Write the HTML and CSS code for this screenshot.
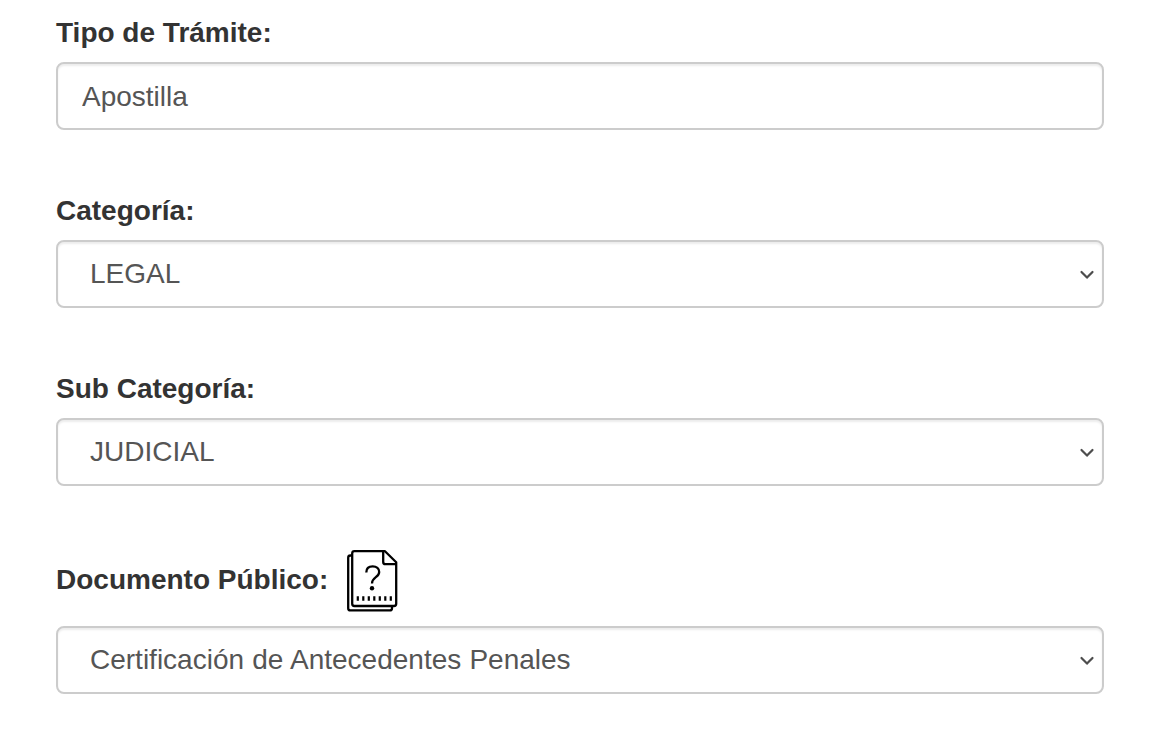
FILE: index.html
```
<!DOCTYPE html>
<html lang="es">

<head>
    <meta charset="utf-8">
    <title>Trámite</title>
    <link rel="stylesheet" href="styles.css">
</head>

<body>
    <form class="form">
        <div class="form-group">
            <label class="control-label" for="tipo">Tipo de Trámite:</label>
            <input class="form-control" id="tipo" type="text" value="Apostilla">
        </div>
        <div class="form-group">
            <label class="control-label" for="categoria">Categoría:</label>
            <div class="select-wrap">
                <select class="form-control select" id="categoria">
                    <option>LEGAL</option>
                </select>
                <svg class="chevron" viewBox="0 0 16 10" width="16" height="10">
                    <path d="M2.500 2L8 7.600L13.500 2"/>
                </svg>
            </div>
        </div>
        <div class="form-group">
            <label class="control-label" for="subcategoria">Sub Categoría:</label>
            <div class="select-wrap">
                <select class="form-control select" id="subcategoria">
                    <option>JUDICIAL</option>
                </select>
                <svg class="chevron" viewBox="0 0 16 10" width="16" height="10">
                    <path d="M2.500 2L8 7.600L13.500 2"/>
                </svg>
            </div>
        </div>
        <div class="form-group">
            <div class="label-row">
                <label class="control-label" for="documento">Documento Público:</label>
                <svg class="doc-icon" viewBox="0 0 52 64" width="52" height="64">
                    <path d="M39 2.200H8.400Q6.200 2.200 6.200 4.400V54.800Q6.200 57 8.400 57H48Q50.200 57 50.200 54.800V13.200Z"/>
                    <path d="M37.200 2.200V13Q37.200 15.200 39.400 15.200H50"/>
                    <path d="M6.200 6.500H4.400Q2.200 6.500 2.200 8.700V59.200Q2.200 61.400 4.400 61.400H43.800Q46 61.400 46 59.200V57"/>
                    <path d="M20.300 23.500C20.300 19.300 23 17.300 26.700 17.300C30.500 17.300 33.200 19.600 33.200 23C33.200 28.500 26 28 26 34.500"/>
                    <path class="dots" d="M10.700 49.500H47"/>
                    <circle class="dot" cx="26" cy="39.300" r="2.200"/>
                </svg>
            </div>
            <div class="select-wrap">
                <select class="form-control select" id="documento">
                    <option>Certificación de Antecedentes Penales</option>
                </select>
                <svg class="chevron" viewBox="0 0 16 10" width="16" height="10">
                    <path d="M2.500 2L8 7.600L13.500 2"/>
                </svg>
            </div>
        </div>
    </form>
</body>

</html>
```

FILE: styles.css
```
* {
    box-sizing: border-box;
}

body {
    margin: 0;
    background-color: #fff;
    color: #333;
    font-family: "Liberation Sans", Arial, sans-serif;
    font-size: 28px;
}

.form {
    padding: 13px 68px 0 56px;
}

.form-group {
    margin-bottom: 61px;
}

.control-label {
    display: block;
    height: 40px;
    margin-bottom: 9px;
    line-height: 40px;
    font-weight: bold;
}

.form-control {
    display: block;
    width: 100%;
    height: 68px;
    padding: 2px 24px 0;
    border: 2px solid #ccc;
    border-radius: 8px;
    background-color: #fff;
    box-shadow: inset 0 2px 2px rgba(0, 0, 0, 0.075);
    color: #555;
    font: inherit;
}

.select-wrap {
    position: relative;
}

.select {
    appearance: none;
    padding: 0 32px;
    padding-bottom: 1px;
    word-spacing: 0.4px;
}

.chevron {
    position: absolute;
    top: 30px;
    right: 9px;
    fill: none;
    stroke: #4d4d4d;
    stroke-width: 2.2;
    stroke-linecap: round;
    stroke-linejoin: round;
    pointer-events: none;
}

.label-row {
    display: flex;
    align-items: center;
    padding: 2px 0 13px;
}

.label-row .control-label {
    margin-bottom: 3px;
}

.doc-icon {
    margin-left: 18px;
    fill: none;
    stroke: #000;
    stroke-width: 2.3;
    stroke-linejoin: round;
}

.dots {
    stroke-width: 4.4;
    stroke-dasharray: 2.2 3.3;
}

.dot {
    fill: #000;
    stroke: none;
}
```
